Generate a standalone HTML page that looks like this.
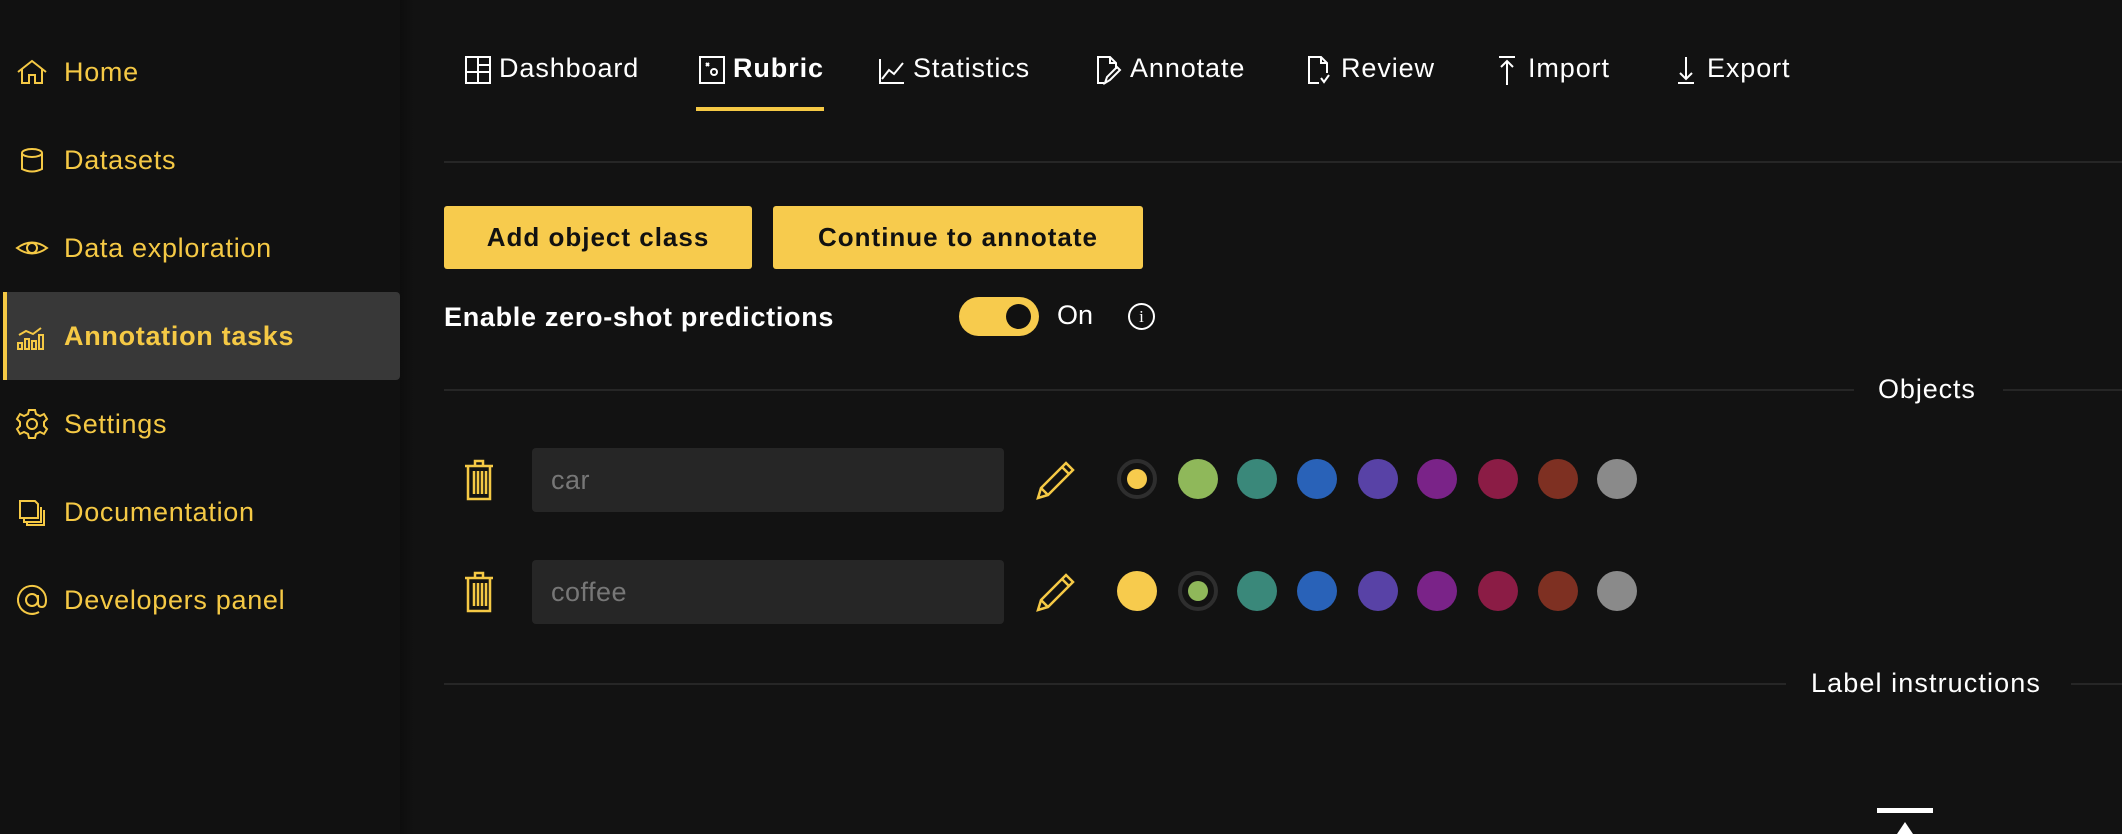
<!DOCTYPE html>
<html><head><meta charset="utf-8"><style>
*{margin:0;padding:0;box-sizing:border-box}
body{width:2122px;height:834px;background:#121212;font-family:"Liberation Sans",sans-serif;position:relative;overflow:hidden;color:#fff}
.side{position:absolute;left:0;top:0;width:400px;height:834px;background:#111}
.shadow{position:absolute;left:400px;top:0;width:14px;height:834px;background:linear-gradient(90deg,#0d0d0d,#101010 60%,#121212)}
.ni{position:absolute;left:0;width:400px;height:88px;color:#f5c945;font-size:27px;letter-spacing:0.7px;display:flex;align-items:center}
.ni span{position:absolute;left:64px}
.ni svg{position:absolute;left:15px;width:34px;height:34px}
.act{background:#383838;left:3px;width:397px;border-radius:4px;font-weight:bold}
.act:before{content:"";position:absolute;left:0;top:0;width:4px;height:88px;background:#f5c945}
.tab{position:absolute;top:50px;font-size:27px;letter-spacing:0.9px;height:36px;line-height:36px;color:#fff}
.tab svg{position:absolute;top:5px;left:-35px;width:28px;height:30px}
.line{position:absolute;height:2px;background:#262626}
.btn{position:absolute;top:206px;height:63px;background:#f7cb4d;border-radius:3px;color:#111;font-weight:bold;font-size:26px;letter-spacing:1px;display:flex;align-items:center;justify-content:center}
.inp{position:absolute;left:532px;width:472px;height:64px;background:#262626;border-radius:4px;color:#777;font-size:27px;line-height:64px;padding-left:19px;letter-spacing:0.5px}
.dot{position:absolute;width:40px;height:40px;border-radius:50%}
.sel{border:4px solid #2e2e2e}
.sel i{position:absolute;left:6px;top:6px;width:20px;height:20px;border-radius:50%}
</style></head><body>
<div class="side">
<div class="ni" style="top:28px"><svg viewBox="0 0 34 34" fill="none" stroke="#f5c945" stroke-width="2"><path d="M3 17 L17 6 L31 17 M7 14 V28 H14 V20 H20 V28 H27 V14"/></svg><span>Home</span></div>
<div class="ni" style="top:116px"><svg viewBox="0 0 34 34" fill="none" stroke="#f5c945" stroke-width="2"><ellipse cx="17" cy="10" rx="10" ry="4"/><path d="M7 10 V26 Q17 31 27 26 V10"/></svg><span>Datasets</span></div>
<div class="ni" style="top:204px"><svg viewBox="0 0 34 34" fill="none" stroke="#f5c945" stroke-width="2"><path d="M2 17 Q17 6 32 17 Q17 28 2 17Z"/><circle cx="17" cy="17" r="5"/></svg><span>Data exploration</span></div>
<div class="ni act" style="top:292px"><svg viewBox="0 0 34 34" fill="none" stroke="#f5c945" stroke-width="2" style="left:12px"><path d="M3 24h4v6H3zM10 20h4v10h-4zM17 22h4v8h-4zM24 16h4v14h-4zM4 16l7-4 7 3 8-6"/></svg><span style="left:61px">Annotation tasks</span></div>
<div class="ni" style="top:380px"><svg viewBox="0 0 34 34" fill="none" stroke="#f5c945" stroke-width="2"><circle cx="17" cy="17" r="5"/><path d="M14 3h6l1 4 4 2 4-2 3 5-3 3v4l3 3-3 5-4-2-4 2-1 4h-6l-1-4-4-2-4 2-3-5 3-3v-4l-3-3 3-5 4 2 4-2z"/></svg><span>Settings</span></div>
<div class="ni" style="top:468px"><svg viewBox="0 0 34 34" fill="none" stroke="#f5c945" stroke-width="2"><path d="M5 6h15l3 3v14H5zM9 23v4h17V12M12 27v3h17V15"/></svg><span>Documentation</span></div>
<div class="ni" style="top:556px"><svg viewBox="0 0 34 34" fill="none" stroke="#f5c945" stroke-width="2"><circle cx="17" cy="17" r="6"/><path d="M23 12v8q0 4 4 4t4-7A14 14 0 1 0 24 29"/></svg><span>Developers panel</span></div>
</div>
<div class="shadow"></div>

<div class="tab" style="left:499px"><svg viewBox="0 0 28 30" fill="none" stroke="#fff" stroke-width="2"><rect x="2" y="2" width="24" height="26"/><path d="M14 2v26M2 17h24M14 10h12"/></svg>Dashboard</div>
<div class="tab" style="left:733px;font-weight:bold"><svg viewBox="0 0 28 30" fill="none" stroke="#fff" stroke-width="2"><rect x="2" y="2" width="24" height="26"/><circle cx="16" cy="17" r="3"/><path d="M8 8l3 3M11 8l-3 3"/></svg>Rubric</div>
<div style="position:absolute;left:696px;top:107px;width:128px;height:4px;background:#f5c945"></div>
<div class="tab" style="left:913px"><svg viewBox="0 0 28 30" fill="none" stroke="#fff" stroke-width="2"><path d="M2 4v24h24M4 24l7-9 5 4 9-11"/></svg>Statistics</div>
<div class="tab" style="left:1130px"><svg viewBox="0 0 28 30" fill="none" stroke="#fff" stroke-width="2"><path d="M9 28H3V2h12l6 6v6M15 2v6h6M10 28l2-6 10-10 3 3-10 10z"/></svg>Annotate</div>
<div class="tab" style="left:1341px"><svg viewBox="0 0 28 30" fill="none" stroke="#fff" stroke-width="2"><path d="M13 28H3V2h12l6 6v10M15 2v6h6M15 23l3 4 5-7"/></svg>Review</div>
<div class="tab" style="left:1528px"><svg viewBox="0 0 28 30" fill="none" stroke="#fff" stroke-width="2"><path d="M6 2h16M14 6v24M8 12l6-6 6 6"/></svg>Import</div>
<div class="tab" style="left:1707px"><svg viewBox="0 0 28 30" fill="none" stroke="#fff" stroke-width="2"><path d="M6 28h16M14 2v22M8 18l6 6 6-6"/></svg>Export</div>

<div class="line" style="left:444px;top:161px;width:1678px"></div>
<div class="btn" style="left:444px;width:308px">Add object class</div>
<div class="btn" style="left:773px;width:370px">Continue to annotate</div>
<div style="position:absolute;left:444px;top:302px;font-size:27px;font-weight:bold;letter-spacing:0.7px">Enable zero-shot predictions</div>
<div style="position:absolute;left:959px;top:297px;width:80px;height:39px;border-radius:20px;background:#f7cb4d"><div style="position:absolute;right:8px;top:7px;width:25px;height:25px;border-radius:50%;background:#111"></div></div>
<div style="position:absolute;left:1057px;top:300px;font-size:27px">On</div>
<div style="position:absolute;left:1128px;top:303px;width:27px;height:27px;border:2px solid #fff;border-radius:50%;font-size:17px;text-align:center;line-height:23px;font-family:'Liberation Serif',serif">i</div>

<div class="line" style="left:444px;top:389px;width:1410px"></div>
<div style="position:absolute;left:1878px;top:374px;font-size:27px;letter-spacing:0.9px">Objects</div>
<div class="line" style="left:2003px;top:389px;width:119px"></div>

<div class="inp" style="top:448px">car</div>
<div class="inp" style="top:560px">coffee</div>

<svg style="position:absolute;left:462px;top:459px" width="34" height="42" viewBox="0 0 34 42" fill="none" stroke="#f5c945" stroke-width="2.5"><path d="M3 7h28M13 7V2h8v5M6 7v33h22V7M12 12v23M16 12v23M20 12v23M24 12v23"/></svg>
<svg style="position:absolute;left:462px;top:571px" width="34" height="42" viewBox="0 0 34 42" fill="none" stroke="#f5c945" stroke-width="2.5"><path d="M3 7h28M13 7V2h8v5M6 7v33h22V7M12 12v23M16 12v23M20 12v23M24 12v23"/></svg>
<svg style="position:absolute;left:1035px;top:459px" width="42" height="42" viewBox="0 0 42 42" fill="none" stroke="#f5c945" stroke-width="2.5"><path d="M3 39l3-10L31 4l7 7L13 36zM6 29l7 7M27 8l7 7"/></svg>
<svg style="position:absolute;left:1035px;top:571px" width="42" height="42" viewBox="0 0 42 42" fill="none" stroke="#f5c945" stroke-width="2.5"><path d="M3 39l3-10L31 4l7 7L13 36zM6 29l7 7M27 8l7 7"/></svg>

<div class="dot sel" style="left:1117px;top:459px"><i style="background:#f7cb4d"></i></div>
<div class="dot" style="left:1178px;top:459px;background:#8fb85a"></div>
<div class="dot" style="left:1237px;top:459px;background:#3a887a"></div>
<div class="dot" style="left:1297px;top:459px;background:#2962b8"></div>
<div class="dot" style="left:1358px;top:459px;background:#5842a6"></div>
<div class="dot" style="left:1417px;top:459px;background:#7a2388"></div>
<div class="dot" style="left:1478px;top:459px;background:#8b1c45"></div>
<div class="dot" style="left:1538px;top:459px;background:#7e3022"></div>
<div class="dot" style="left:1597px;top:459px;background:#8a8a8a"></div>

<div class="dot" style="left:1117px;top:571px;background:#f7cb4d"></div>
<div class="dot sel" style="left:1178px;top:571px"><i style="background:#8fb85a"></i></div>
<div class="dot" style="left:1237px;top:571px;background:#3a887a"></div>
<div class="dot" style="left:1297px;top:571px;background:#2962b8"></div>
<div class="dot" style="left:1358px;top:571px;background:#5842a6"></div>
<div class="dot" style="left:1417px;top:571px;background:#7a2388"></div>
<div class="dot" style="left:1478px;top:571px;background:#8b1c45"></div>
<div class="dot" style="left:1538px;top:571px;background:#7e3022"></div>
<div class="dot" style="left:1597px;top:571px;background:#8a8a8a"></div>

<div class="line" style="left:444px;top:683px;width:1342px"></div>
<div style="position:absolute;left:1811px;top:668px;font-size:27px;letter-spacing:1.1px">Label instructions</div>
<div class="line" style="left:2071px;top:683px;width:51px"></div>

<div style="position:absolute;left:1877px;top:808px;width:56px;height:5px;background:#fff"></div>
<div style="position:absolute;left:1897px;top:822px;width:0;height:0;border-left:8px solid transparent;border-right:8px solid transparent;border-bottom:12px solid #fff"></div>
</body></html>
